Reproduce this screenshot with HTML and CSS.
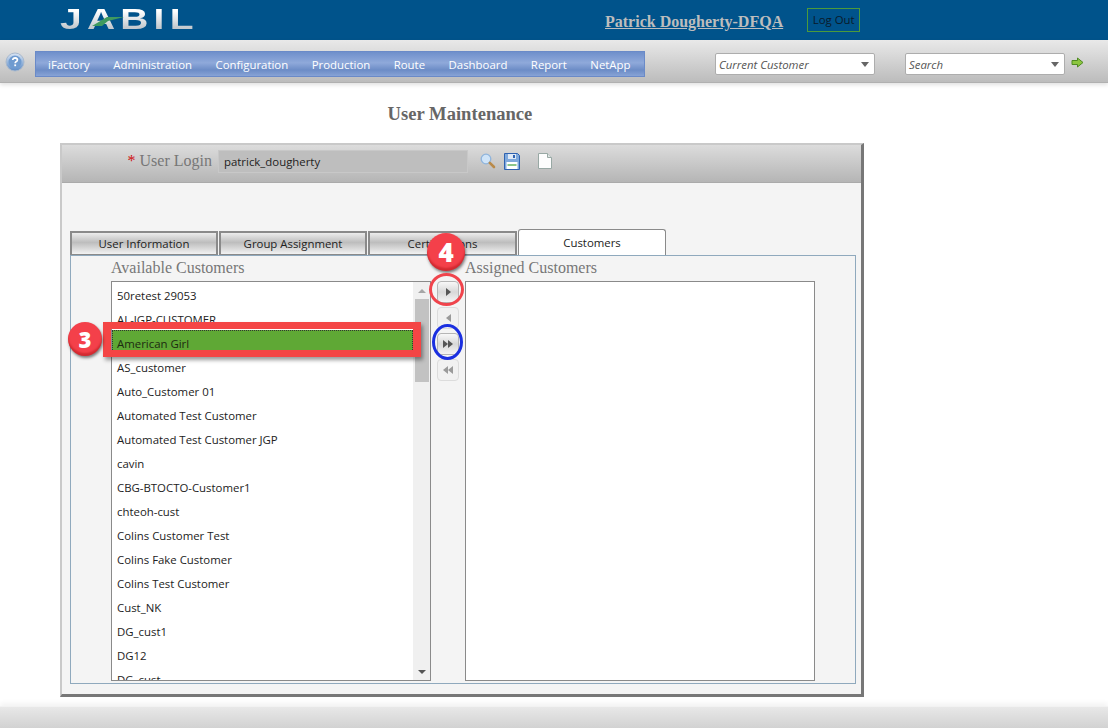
FILE: index.html
```html
<!DOCTYPE html>
<html lang="en">

<head>
    <meta charset="UTF-8">
    <title>User Maintenance</title>
    <link rel="stylesheet" href="styles.css">
</head>

<body>
    <!-- Top bar -->
    <header class="topbar">
        <div class="logo">
            <span class="logo-text">JABIL</span>
            <svg class="logo-swoosh" width="34" height="14" viewBox="0 0 34 14">
                <path d="M1 11 L16 2 L33 2 L17 6 L11 11 Z" fill="#3f9a5f" />
            </svg>
        </div>
        <a class="user-link" href="#">Patrick Dougherty-DFQA</a>
        <button class="logout" type="button">Log Out</button>
    </header>

    <!-- Menu toolbar -->
    <nav class="toolbar">
        <svg class="help-icon" width="20" height="20" viewBox="0 0 20 20">
            <defs>
                <linearGradient id="helpFill" x1="0" y1="0" x2="0" y2="1">
                    <stop offset="0" stop-color="#dbe6f4" />
                    <stop offset="1" stop-color="#5a8ac6" />
                </linearGradient>
            </defs>
            <circle cx="10" cy="10" r="9" fill="url(#helpFill)" stroke="#a9b9cd" />
            <circle cx="10" cy="10" r="6.500" fill="#6f9bd0" />
            <path d="M7.700 8 Q8 5.800 10.200 5.800 Q12.500 6 12.400 8 Q12.300 9.200 11 9.800 Q10.200 10.300 10.200 11.300" fill="none" stroke="#fff" stroke-width="1.700" />
            <rect x="9.300" y="12.400" width="1.800" height="1.800" fill="#fff" />
        </svg>
        <ul class="menu">
            <li>iFactory</li>
            <li>Administration</li>
            <li>Configuration</li>
            <li>Production</li>
            <li>Route</li>
            <li>Dashboard</li>
            <li>Report</li>
            <li>NetApp</li>
        </ul>
        <div class="combo combo-customer">
            <span>Current Customer</span>
            <i class="combo-arrow"></i>
        </div>
        <div class="combo combo-search">
            <span>Search</span>
            <i class="combo-arrow"></i>
        </div>
        <svg class="go-icon" width="13" height="11" viewBox="0 0 13 11">
            <path d="M1 3.500 H6.500 V1 L12 5.500 L6.500 10 V7.500 H1 Z" fill="#8cc63f" stroke="#4f8a22" />
        </svg>
    </nav>

    <main class="page">
        <h1 class="page-title">User Maintenance</h1>

        <section class="panel">
            <div class="panel-head">
                <label class="login-label"><span class="req">*</span> User Login</label>
                <div class="login-input">patrick_dougherty</div>
                <svg class="tool tool-search" width="16" height="16" viewBox="0 0 16 16">
                    <circle cx="6" cy="6" r="4.800" fill="#cfe4f8" stroke="#8fb4dc" stroke-width="1.300" />
                    <path d="M9.800 9.800 L14 14" stroke="#b98a4a" stroke-width="2.600" stroke-linecap="round" />
                </svg>
                <svg class="tool tool-save" width="16" height="17" viewBox="0 0 16 17">
                    <path d="M.5 .5 H13.500 L15.500 2.500 V16.500 H.5 Z" fill="#7fa9dc" stroke="#2f62b0" />
                    <rect x="4" y="1" width="8" height="5" fill="#dfe9f6" />
                    <rect x="9" y="2" width="2" height="3" fill="#2f62b0" />
                    <rect x="2.500" y="9" width="11" height="7" fill="#fff" />
                    <rect x="3.500" y="11" width="9" height="2" fill="#8cc68a" />
                </svg>
                <svg class="tool tool-new" width="14" height="16" viewBox="0 0 14 16">
                    <path d="M.5 .5 H9.500 L13.500 4.500 V15.500 H.5 Z" fill="#fdfdfd" stroke="#98a8a4" />
                    <path d="M9.500 .5 V4.500 H13.500" fill="#dfe6e4" stroke="#98a8a4" />
                </svg>
            </div>

            <div class="panel-body">
                <div class="tabs">
                    <div class="tab">User Information</div>
                    <div class="tab">Group Assignment</div>
                    <div class="tab tab-wide">Certifications</div>
                    <div class="tab tab-active">Customers</div>
                </div>

                <div class="tab-content">
                    <div class="picker">
                        <div class="picker-col">
                            <div class="picker-label">Available Customers</div>
                            <div class="listbox listbox-left">
                                <ul class="items">
                                    <li>50retest 29053</li>
                                    <li>AL-JGP-CUSTOMER</li>
                                    <li class="selected">American Girl</li>
                                    <li>AS_customer</li>
                                    <li>Auto_Customer 01</li>
                                    <li>Automated Test Customer</li>
                                    <li>Automated Test Customer JGP</li>
                                    <li>cavin</li>
                                    <li>CBG-BTOCTO-Customer1</li>
                                    <li>chteoh-cust</li>
                                    <li>Colins Customer Test</li>
                                    <li>Colins Fake Customer</li>
                                    <li>Colins Test Customer</li>
                                    <li>Cust_NK</li>
                                    <li>DG_cust1</li>
                                    <li>DG12</li>
                                    <li>DG_cust</li>
                                </ul>
                                <div class="scrollbar">
                                    <i class="scroll-up"></i>
                                    <div class="scroll-thumb"></div>
                                    <i class="scroll-down"></i>
                                </div>
                            </div>
                        </div>

                        <div class="move-buttons">
                            <button class="move" type="button"><i class="tri-r"></i></button>
                            <button class="move move-off" type="button"><i class="tri-l"></i></button>
                            <button class="move" type="button"><i class="tri-r"></i><i class="tri-r"></i></button>
                            <button class="move move-off" type="button"><i class="tri-l"></i><i class="tri-l"></i></button>
                        </div>

                        <div class="picker-col">
                            <div class="picker-label">Assigned Customers</div>
                            <div class="listbox listbox-right"></div>
                        </div>
                    </div>
                </div>
            </div>

            <!-- Tutorial annotations drawn over the form -->
            <div class="mark-rect"></div>
            <div class="badge badge-3">3</div>
            <div class="badge badge-4">4</div>
            <div class="ring ring-red"></div>
            <div class="ring ring-blue"></div>
        </section>
    </main>

    <footer class="footer"></footer>
</body>

</html>
```

FILE: styles.css
```css
/* General Styles */
html,
body {
    margin: 0;
    height: 728px;
    overflow: hidden;
}

body {
    display: flex;
    flex-direction: column;
    background: #fff;
    font-family: "Open Sans", "Noto Sans", sans-serif;
    font-size: 11.4px;
    color: #222;
}

ul {
    list-style: none;
    margin: 0;
    padding: 0;
}

/* Top bar */
.topbar {
    display: flex;
    align-items: center;
    height: 40px;
    background: #00538b;
}

.logo {
    position: relative;
    width: 134px;
    height: 40px;
    margin-left: 60px;
}

.logo-text {
    display: block;
    font-family: "Liberation Sans", sans-serif;
    font-weight: bold;
    font-size: 30px;
    line-height: 37px;
    letter-spacing: 4px;
    transform: scaleX(1.3);
    transform-origin: left center;
    background: linear-gradient(#ffffff 30%, #c3c9ce 75%);
    -webkit-background-clip: text;
    background-clip: text;
    color: transparent;
}

.logo-swoosh {
    position: absolute;
    left: 31px;
    top: 15px;
}

.user-link {
    margin-left: 411px;
    margin-top: 3px;
    font-family: "Liberation Serif", serif;
    font-weight: bold;
    font-size: 16px;
    color: #bdbdbd;
}

.logout {
    width: 53px;
    height: 24px;
    margin-left: 24px;
    margin-top: -1px;
    padding: 0;
    background: transparent;
    border: 1px solid #4c9a3c;
    font-family: "Open Sans", sans-serif;
    font-size: 11.4px;
    color: #0a1a2a;
}

/* Menu toolbar */
.toolbar {
    display: flex;
    align-items: center;
    height: 43px;
    padding-top: 6px;
    box-sizing: border-box;
    background: linear-gradient(#e9e9e9, #bcbcbc);
    border-bottom: 1px solid #b0b0b0;
    box-shadow: 0 2px 4px rgba(0, 0, 0, 0.12);
}

.help-icon {
    margin-left: 5px;
    margin-top: -4px;
}

.menu {
    display: flex;
    gap: 23.500px;
    width: 610px;
    height: 26px;
    margin-left: 10px;
    padding-left: 12px;
    box-sizing: border-box;
    align-items: center;
    background: linear-gradient(#6f8fcb, #8fa9da 45%, #6c8cc6 75%, #87a3d6);
    border: 1px solid #6a8ac8;
    color: #fff;
}

.combo {
    display: flex;
    align-items: center;
    justify-content: space-between;
    width: 160px;
    height: 22px;
    padding: 0 5px 0 3px;
    box-sizing: border-box;
    background: #fff;
    border: 1px solid #adadad;
    border-radius: 2px;
    font-style: italic;
    color: #555;
}

.combo-customer {
    margin-left: 70px;
}

.combo-search {
    margin-left: 30px;
}

.combo-arrow {
    width: 0;
    height: 0;
    border-left: 4px solid transparent;
    border-right: 4px solid transparent;
    border-top: 5px solid #666;
}

.go-icon {
    margin-left: 6px;
    margin-top: -4px;
}

/* Page */
.page {
    flex: 1;
}

.page-title {
    width: 920px;
    margin: 21px 0 19px;
    text-align: center;
    font-family: "Liberation Serif", serif;
    font-size: 18.600px;
    line-height: 20px;
    color: #666;
}

/* Panel */
.panel {
    position: relative;
    width: 804px;
    height: 554px;
    margin-left: 60px;
    box-sizing: border-box;
    background: #f4f4f4;
    border: 2px solid #c9c9c9;
    border-right: 3px solid #777;
    border-bottom: 3px solid #777;
}

.panel-head {
    display: flex;
    align-items: center;
    height: 38px;
    padding-bottom: 5px;
    box-sizing: border-box;
    background: linear-gradient(#dcdcdc, #b5b5b5);
    border-bottom: 1px solid #aaa;
}

.login-label {
    width: 150px;
    text-align: right;
    font-family: "Liberation Serif", serif;
    font-size: 16px;
    color: #777;
}

.req {
    color: #d01010;
}

.login-input {
    width: 250px;
    height: 23px;
    margin-left: 6px;
    padding-left: 5px;
    box-sizing: border-box;
    background: #bebebe;
    border: 1px solid #c8c8c8;
    line-height: 21px;
}

.tool-search {
    margin-left: 12px;
}

.tool-save {
    margin-left: 8px;
}

.tool-new {
    margin-left: 18px;
}

.panel-body {
    padding: 46px 5px 0 8px;
}

/* Tabs */
.tabs {
    display: flex;
    align-items: flex-end;
    height: 26px;
    gap: 1px;
}

.tab {
    width: 148px;
    height: 24px;
    box-sizing: border-box;
    border: 2px solid #8a8a8a;
    border-bottom: 1px solid #8a8a8a;
    background: linear-gradient(#ececec, #bdbdbd 45%, #f2f2f2);
    text-align: center;
    line-height: 21px;
}

.tab-wide {
    width: 149px;
}

.tab-active {
    height: 26px;
    background: #fff;
    border: 1px solid #8a8a8a;
    border-bottom: 0;
    border-radius: 3px 3px 0 0;
    line-height: 26px;
}

.tab-content {
    height: 429px;
    box-sizing: border-box;
    border: 1px solid #8fa9bd;
    padding-left: 40px;
}

/* Customer picker */
.picker {
    display: flex;
}

.picker-label {
    height: 25px;
    font-family: "Liberation Serif", serif;
    font-size: 16px;
    line-height: 24px;
    color: #777;
}

.listbox {
    display: flex;
    height: 400px;
    box-sizing: border-box;
    background: #fff;
    border: 1px solid #8a8a8a;
    overflow: hidden;
}

.listbox-left {
    width: 320px;
}

.listbox-right {
    width: 350px;
}

.items {
    flex: 1;
    padding-top: 2px;
    overflow: hidden;
}

.items li {
    height: 24px;
    padding-left: 5px;
    line-height: 24px;
    white-space: nowrap;
}

.items .selected {
    margin-top: -2px;
    padding-top: 2px;
    background: #5fa835;
    outline: 1px dotted #333;
    outline-offset: -1px;
    color: #1c2a10;
}

.scrollbar {
    display: flex;
    flex-direction: column;
    align-items: center;
    width: 17px;
    background: #f0f0f0;
}

.scroll-up {
    width: 0;
    height: 0;
    margin: 7px 0 6px;
    border-left: 4px solid transparent;
    border-right: 4px solid transparent;
    border-bottom: 4px solid #a6a6a6;
}

.scroll-thumb {
    width: 14px;
    height: 83px;
    background: #c2c2c2;
}

.scroll-down {
    width: 0;
    height: 0;
    margin-top: auto;
    margin-bottom: 6px;
    border-left: 4px solid transparent;
    border-right: 4px solid transparent;
    border-top: 4px solid #555;
}

.move-buttons {
    display: flex;
    flex-direction: column;
    gap: 4px;
    width: 24px;
    margin: 25px 4px 0 6px;
}

.move {
    display: flex;
    align-items: center;
    justify-content: center;
    width: 22px;
    height: 22px;
    padding: 0;
    background: linear-gradient(#f8f8f8, #d8d8d8 50%, #f4f4f4);
    border: 1px solid #b5b5b5;
    border-radius: 4px;
}

.move-off {
    background: #f1f1f1;
    border-color: #dcdcdc;
}

.tri-r,
.tri-l {
    width: 0;
    height: 0;
    border-top: 4px solid transparent;
    border-bottom: 4px solid transparent;
}

.tri-r {
    border-left: 5px solid #555;
}

.tri-l {
    border-right: 5px solid #9a9a9a;
}

/* Annotations */
.mark-rect {
    position: absolute;
    left: 41px;
    top: 177px;
    width: 302px;
    height: 21px;
    border: solid #f44545;
    border-width: 7px 8px;
    box-shadow: 2px 3px 4px rgba(0, 0, 0, 0.4);
}

.badge {
    position: absolute;
    display: flex;
    align-items: center;
    justify-content: center;
    box-sizing: border-box;
    border-radius: 50%;
    background: #f4404a;
    box-shadow: 1px 2px 3px rgba(0, 0, 0, 0.5), inset 0 -3px 2px rgba(150, 0, 0, 0.35);
    color: #fff;
    font-family: "Open Sans", sans-serif;
    font-weight: 800;
}

.badge-3 {
    left: 6px;
    top: 177px;
    width: 34px;
    height: 34px;
    font-size: 22px;
}

.badge-4 {
    left: 365px;
    top: 88px;
    width: 38px;
    height: 38px;
    font-size: 26px;
}

.ring {
    position: absolute;
    box-sizing: border-box;
    border-radius: 50%;
    border: 3px solid;
}

.ring-red {
    left: 367px;
    top: 128px;
    width: 35px;
    height: 33px;
    border-color: #f0444c;
}

.ring-blue {
    left: 370px;
    top: 179px;
    width: 31px;
    height: 36px;
    border-color: #1a2fe0;
}

/* Footer */
.footer {
    height: 21px;
    background: linear-gradient(#e8e8e8, #d2d2d2);
    border-top: 1px solid #f2f2f2;
    box-shadow: 0 -3px 5px rgba(0, 0, 0, 0.05);
}
```
